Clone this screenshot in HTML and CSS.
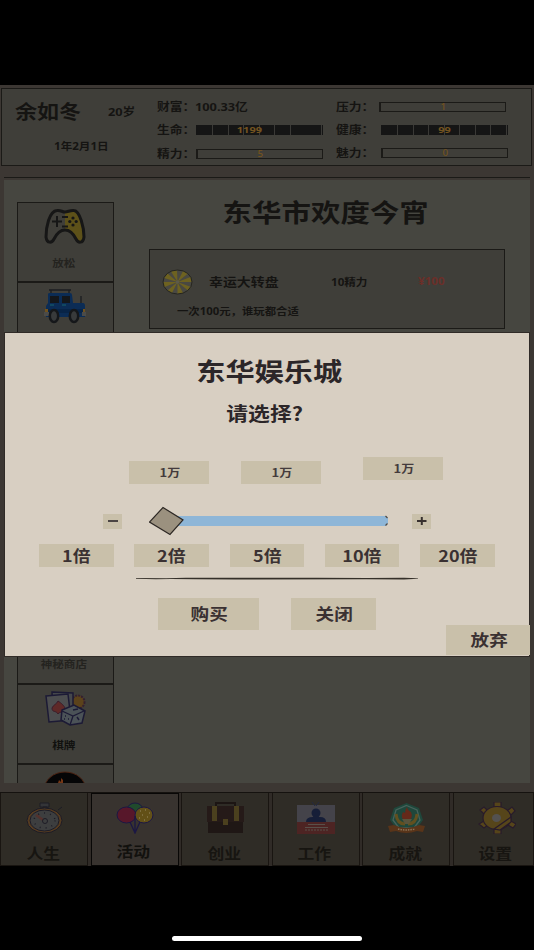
FILE: index.html
```
<!DOCTYPE html>
<html lang="zh-CN">
<head>
  <meta charset="UTF-8" />
  <meta name="viewport" content="width=device-width, initial-scale=1.0"/>
  <title>东华娱乐城</title>
  <link rel="stylesheet" href="styles.css">
</head>
<body>

<div class="game">

  <!-- Player status -->
  <header class="status">
    <div class="who">
      <div class="who-top">
        <span class="name">余如冬</span>
        <span class="age">20岁</span>
      </div>
      <div class="date">1年2月1日</div>
    </div>
    <div class="stats stats-left">
      <div class="stat"><span class="label">财富：</span><span class="money">100.33亿</span></div>
      <div class="stat"><span class="label">生命：</span><div class="meter full"><b>1199</b></div></div>
      <div class="stat energy"><span class="label">精力：</span><div class="meter"><b>5</b></div></div>
    </div>
    <div class="stats stats-right">
      <div class="stat stress"><span class="label">压力：</span><div class="meter"><b>1</b></div></div>
      <div class="stat"><span class="label">健康：</span><div class="meter full"><b>99</b></div></div>
      <div class="stat charm"><span class="label">魅力：</span><div class="meter"><b>0</b></div></div>
    </div>
  </header>

  <!-- Activities -->
  <main class="panel">
    <nav class="side">
      <div class="side-item">
        <svg width="42" height="36" viewBox="0 0 42 36">
          <path d="M21 4H32C37 5 40 20 40 30C39 36 34 35 32 31C29 25 26 22 21 22Z" fill="#5d5119"/>
          <path d="M13 2.5C17 2 18 4 21 4S26 2 30 2.5C36 3 40 20 40 29C39 36 34 35 32 31C29 25 26 22 21 22S13 25 10 31C8 35 3 36 2 29C2 20 5 3 13 2.5Z" fill="none" stroke="#161616" stroke-width="3"/>
          <path d="M8 13.500h10M13 8v11M18 9h6M18 18.500h6" stroke="#161616" stroke-width="2"/>
          <g fill="#161616"><circle cx="29" cy="10" r="1.600"/><circle cx="29" cy="17" r="1.600"/><circle cx="25.800" cy="13.500" r="1.600"/><circle cx="32.200" cy="13.500" r="1.600"/></g>
        </svg>
        <span class="muted">放松</span>
      </div>
      <div class="side-item">
        <svg width="42" height="36" viewBox="0 0 42 36">
          <path d="M5 2h22M7 2v4M25 2v4M37 8v10" stroke="#1b1d20" stroke-width="1.300"/>
          <path d="M4 6Q4 5 6 5H26Q28 5 28 7L29 15H39Q41 15 41 18V29H2V18L4 15Z" fill="#0b2c55"/>
          <path d="M2 21h39v4H2z" fill="#082447"/>
          <path d="M6 8h9v7H6zM18 8h8v7h-8z" fill="#14171b"/>
          <path d="M6 17h4M18 17h4" stroke="#145066" stroke-width="1.500"/>
          <path d="M0 24h5v4H0zM38 24h4v4h-4z" fill="#4b4b49"/>
          <path d="M1 21h3v3H1zM39 21h2v3h-2z" fill="#71521c"/>
          <g fill="#383a3b" stroke="#15171a" stroke-width="2.500"><ellipse cx="10" cy="28" rx="4.200" ry="6"/><ellipse cx="30" cy="28" rx="4.200" ry="6"/></g>
        </svg>
      </div>
      <div class="side-item"></div>
      <div class="side-item"></div>
      <div class="side-item"></div>
      <div class="side-item"><i class="icon-gap"></i><span class="muted">神秘商店</span></div>
      <div class="side-item">
        <svg width="42" height="36" viewBox="0 0 42 36">
          <circle cx="34" cy="12" r="6.500" fill="#5b421b" stroke="#35202f" stroke-width="2" stroke-dasharray="2 1"/>
          <path d="M8 2L29 3V24H9Z" fill="#45474b" stroke="#1c1a35" stroke-width="1.500"/>
          <path d="M2 6L24 4L27 30L5 32Z" fill="#4c4d4f" stroke="#1c1a35" stroke-width="1.500"/>
          <path d="M14 11C17 13 21 16 21 19C20 23 16 21 14 24C12 20 8 23 8 18C9 15 13 14 14 11Z" fill="#5f2928" stroke="#3a1d2b"/>
          <path d="M18 20L30 15L41 21L38 33L26 35L17 30Z" fill="#4b5257" stroke="#1c1a35" stroke-width="1.500"/>
          <path d="M18 21L29 26L40 21M29 26L26 35" fill="none" stroke="#1c1a35" stroke-width="1.300"/>
          <path d="M21 26h1M24 29h1M20 29h1M33 27l2 3M29 20l5-1" stroke="#1c1a35" stroke-width="1.500"/>
        </svg>
        <span class="dark">棋牌</span>
      </div>
      <div class="side-item">
        <svg width="42" height="36" viewBox="0 0 42 36">
          <ellipse cx="21" cy="19" rx="20.500" ry="17" fill="#050506" stroke="#4d2413"/>
          <path d="M13 16L15 10L17 12L17 8L19 10V16Z" fill="#753615"/>
        </svg>
      </div>
    </nav>

    <section class="events">
      <h1>东华市欢度今宵</h1>
      <div class="event">
        <div class="event-row">
          <svg class="wheel" width="31" height="26" viewBox="0 0 31 26">
            <ellipse cx="15.500" cy="13" rx="14.500" ry="12" fill="#494842"/>
            <path fill="#6e6220" d="M15.500 13L15 1L9 2.500ZM15.500 13L5.500 4.500L2 9ZM15.500 13L1 13L2.500 18ZM15.500 13L5.500 21.500L10 24ZM15.500 13L15.500 25L21 24ZM15.500 13L26 21.500L29 18ZM15.500 13L30 13L28.500 8ZM15.500 13L26 4.500L21 2Z"/>
            <ellipse cx="15.500" cy="13" rx="14.500" ry="12" fill="none" stroke="#25251f"/>
            <circle cx="15.500" cy="13" r="1.800" fill="#5c5a4c"/>
          </svg>
          <span class="event-name">幸运大转盘</span>
          <span class="cost">10精力</span>
          <span class="price">¥100</span>
        </div>
        <p>一次100元，谁玩都合适</p>
      </div>
    </section>
  </main>

  <!-- Bottom tabs -->
  <footer class="tabs">
    <div class="tab">
      <svg width="38" height="32" viewBox="0 0 38 32">
        <path d="M14 1h9v4h-9zM17 5h4v4h-4zM32 8l4-3" fill="#343538" stroke="#1c1c24"/>
        <ellipse cx="18.500" cy="18.500" rx="17.500" ry="12.500" fill="#553b20" stroke="#1d1c26"/>
        <ellipse cx="18.500" cy="18.500" rx="14.500" ry="10.500" fill="#3d3e3f" stroke="#1d1c26"/>
        <ellipse cx="18.500" cy="18.500" rx="10.500" ry="7.500" fill="none" stroke="#1d1c26" stroke-width="1.500" stroke-dasharray="1 5"/>
        <path d="M18.500 19L10 13" stroke="#54312c" stroke-width="2.500"/>
        <circle cx="19" cy="19" r="2.500" fill="#3d3e3f" stroke="#1d1c26"/>
      </svg>
      <span>人生</span>
    </div>
    <div class="tab current">
      <svg width="38" height="32" viewBox="0 0 38 32">
        <ellipse cx="19" cy="7" rx="7.500" ry="6" fill="#204a2c" stroke="#1b1744"/>
        <ellipse cx="10.500" cy="13" rx="9.500" ry="8" fill="#57172a" stroke="#1b1744"/>
        <ellipse cx="28" cy="13" rx="9" ry="8" fill="#625017" stroke="#1b1744"/>
        <path d="M14 20L19 31L24 20M19 14V31" fill="none" stroke="#1b1744" stroke-width="1.300"/>
        <path d="M24 9h1M29 8h1M33 11h1M26 13h1M31 15h1M23 16h1M28 18h1" stroke="#85774b" stroke-width="1.300"/>
      </svg>
      <span>活动</span>
    </div>
    <div class="tab">
      <svg width="38" height="32" viewBox="0 0 38 32">
        <path d="M9 4V1H28V4" fill="none" stroke="#1c1513" stroke-width="2"/>
        <path d="M0 4h37v16H0z" fill="#251a18"/>
        <path d="M1 20h35v11H1z" fill="#1f1715"/>
        <path d="M5 4h5v15H5zM27 4h5v15h-5zM16 17h5v6h-5z" fill="#4b401e"/>
      </svg>
      <span>创业</span>
    </div>
    <div class="tab">
      <svg width="38" height="32" viewBox="0 0 38 32">
        <path d="M0 3h38v17H0z" fill="#44434a"/>
        <path d="M0 20h38v12H0z" fill="#4d2423"/>
        <ellipse cx="19" cy="11" rx="4.500" ry="4.500" fill="#161e38"/>
        <path d="M9 20Q9 15 16 15H23Q29 15 29 20Z" fill="#161e38"/>
        <path d="M15 0l3 4M22 0l-3 4" stroke="#242a42"/>
        <path d="M11 22.500h17M8 25.500h23" stroke="#59504a"/>
        <path d="M8 28h23" stroke="#59504a" stroke-dasharray="2 1"/>
      </svg>
      <span>工作</span>
    </div>
    <div class="tab">
      <svg width="38" height="32" viewBox="0 0 38 32">
        <path d="M18.500 1L31 6L35 18L27 29H10L2 18L6 6Z" fill="#1f473b"/>
        <path d="M18.500 3.500L29 8L32 18L26 26H11L5 18L8 8Z" fill="none" stroke="#47625b" stroke-width="1.300"/>
        <path d="M8 12Q9 22 17 22M29 12Q28 22 20 22" fill="none" stroke="#62501f" stroke-width="3"/>
        <path d="M19 5Q20 9 23 10Q26 17 19 18Q11 17 15 10L17 11Q17 8 19 5Z" fill="#65291a"/>
        <path d="M14 17h10l-3 5h-4z" fill="#59543c"/>
        <path d="M0 24L6 23Q18 29 31 23L37 24L35 30L29 29Q18 33 8 29L2 30Z" fill="#593419"/>
        <path d="M10 27Q18 29 27 27" fill="none" stroke="#8c7558" stroke-width="1.500" stroke-dasharray="1.500 1"/>
      </svg>
      <span>成就</span>
    </div>
    <div class="tab">
      <svg width="38" height="32" viewBox="0 0 38 32">
        <g fill="#56451a" stroke="#281b2b" stroke-width="1.200">
          <path d="M16 0h7v5h-7zM16 27h7v5h-7zM2 8l4-3 4 4-4 3zM29 9l5-4 3 4-4 4zM1 22l5-3 4 4-4 3zM30 23l3-4 5 3-3 4z"/>
          <ellipse cx="19" cy="16" rx="14" ry="11.500"/>
          <path d="M16 27L33 15V20L22 28Z"/>
        </g>
        <ellipse cx="18.500" cy="16" rx="4.500" ry="4" fill="#535150"/>
      </svg>
      <span>设置</span>
    </div>
  </footer>
</div>

<div class="home-bar"></div>

<!-- Casino dialog -->
<div class="dialog">
  <h2>东华娱乐城</h2>
  <h3>请选择?</h3>

  <div class="amounts">
    <div class="chip"><span>1万</span></div>
    <div class="chip"><span>1万</span></div>
    <div class="chip raised"><span>1万</span></div>
  </div>

  <div class="slider">
    <button class="step"><svg width="19" height="15" viewBox="0 0 19 15"><path d="M5 7h10" stroke="#4b4544" stroke-width="2"/></svg></button>
    <svg class="track" width="240" height="30" viewBox="0 0 240 30">
      <path d="M18 10H237L239 12V17L237 20H18Z" fill="#8eb6d7"/>
      <path d="M236.500 10L238.500 12M238.500 17.500L236.500 19.500" stroke="#504a43" stroke-width="1.200"/>
      <path d="M14 1.500L34 14L21 28.500L0.500 16Z" fill="#9b917f" stroke="#2d2824" stroke-width="1.200"/>
    </svg>
    <button class="step"><svg width="19" height="15" viewBox="0 0 19 15"><path d="M5 7h9.500M9.800 3v8" stroke="#38312f" stroke-width="2"/></svg></button>
  </div>

  <div class="times">
    <button><span>1倍</span></button>
    <button><span>2倍</span></button>
    <button><span>5倍</span></button>
    <button><span>10倍</span></button>
    <button><span>20倍</span></button>
  </div>

  <svg class="rule" width="282" height="4" viewBox="0 0 282 4">
    <path d="M0 1L30 1.200L50 .8L180 .8L230 1L268 .8L282 1.200V1.800L268 2.500L230 2.200L100 2.500L60 2.200L35 2L20 2.200L0 1.800Z" fill="#353029"/>
  </svg>

  <div class="actions">
    <button class="buy"><span>购买</span></button>
    <button class="close"><span>关闭</span></button>
  </div>
  <button class="quit"><span>放弃</span></button>
</div>

</body>
</html>
```
FILE: styles.css
```
:root {
  --line: #1b1a17;
  --ink: #151412;
  --chip: #c9c0aa;
  --paper: #d8cfc2;
  --font: 'Noto Sans', 'Noto Sans CJK SC', sans-serif;
  --font-cjk: 'Noto Sans CJK SC', sans-serif;
}

* {
  box-sizing: border-box;
  margin: 0;
  padding: 0;
}

body {
  width: 534px;
  height: 950px;
  background: #000;
  color: var(--ink);
  font-family: var(--font);
  font-weight: bold;
  overflow: hidden;
  padding-top: 85px;
  position: relative;
}

svg {
  display: block;
  flex: none;
}

/* the game is drawn wider than its natural proportions */
span,
h1, h2, h3,
.date,
.event p,
.meter b {
  display: inline-block;
  transform: scaleX(1.16);
  white-space: nowrap;
}

.game {
  height: 781px;
  background: #3c3733;
  padding-top: 3px;
  display: flex;
  flex-direction: column;
}

/* Status */
.status {
  height: 78px;
  margin: 0 2px 0 1px;
  flex: none;
  border: 1px solid var(--line);
  background: #3f3e39;
  display: flex;
  font-size: 11px;
  line-height: 16px;
}

.who {
  width: 155px;
  padding: 12px 0 0 13px;
}

.who-top {
  display: flex;
  align-items: center;
  height: 22px;
}

.name {
  font-size: 19px;
  transform-origin: left;
  width: 93px;
}

.age {
  transform-origin: left;
}

.date {
  margin: 15px 0 0 39px;
  font-size: 10px;
  transform-origin: left;
}

.stats {
  padding-top: 10px;
}

.stats-left {
  width: 179px;
}

.stat {
  display: flex;
  align-items: center;
  height: 16px;
  margin-bottom: 7px;
}

.label {
  width: 39px;
  transform-origin: left;
}

.stats-right .label {
  width: 45px;
}

.money {
  transform-origin: left;
  margin-left: -1px;
}

.meter {
  width: 127px;
  height: 10px;
  border: 1px solid var(--line);
  border-left-width: 2px;
  display: flex;
  align-items: center;
  justify-content: center;
}

.meter b {
  font-size: 8.5px;
  line-height: 8px;
  font-weight: 500;
  color: #735320;
}

.meter.full {
  border: none;
  background: repeating-linear-gradient(90deg, #151515 0 14.5px, #3a3936 14.5px 15.5px) 2px 0 #151515 no-repeat;
}

.meter.full b {
  padding-right: 18px;
  font-size: 9.5px;
  font-weight: bold;
}

.stats-right .meter.full b {
  padding: 0;
}

.energy {
  margin-top: 8px;
}

.stress .meter {
  margin-left: -2px;
}

/* Panel */
.panel {
  height: 606px;
  margin: 11px 4px 9px;
  flex: none;
  background: #464640;
  border-top: 1px solid var(--line);
  box-shadow: inset 0 2px #3c3733;
  display: flex;
  overflow: hidden;
}

.side {
  width: 97px;
  margin: 24px 36px 0 13px;
}

.side-item {
  height: 80.3px;
  border: 1px solid var(--line);
  background: #3f3e39;
  padding: 5px 2px 0 0;
  display: flex;
  flex-direction: column;
  align-items: center;
  gap: 10px;
}

.side-item span {
  font-size: 10px;
  line-height: 18px;
  padding-right: 2px;
}

.muted {
  color: #24231f;
}

.dark {
  color: #11110f;
}

.icon-gap {
  height: 36px;
}

.events {
  width: 355px;
  margin-left: -1px;
}

h1, h2, h3 {
  display: block;
  width: fit-content;
}

h1 {
  font: bold 25.4px/34px var(--font-cjk);
  margin: 16px auto 21px;
  padding-right: 2px;
}

.event {
  width: 356px;
  height: 80px;
  border: 1px solid var(--line);
  background: #3f3e39;
  padding: 18px 0 0 12px;
}

.event-row {
  display: flex;
  align-items: center;
  height: 28px;
  font-size: 10px;
}

.event-row span {
  transform-origin: left;
}

.event-name {
  font-size: 12px;
  width: 122px;
  margin: -1px 0 0 16px;
}

.cost {
  width: 87px;
  margin-top: -2px;
}

.price {
  margin-top: -2px;
  color: #6b2f29;
}

.event p {
  margin: 8px 0 0 15px;
  font-size: 9.8px;
  line-height: 16px;
  transform-origin: left;
}

/* Tabs */
.tabs {
  height: 74px;
  display: grid;
  grid-template-columns: repeat(5, 88px) 1fr;
  column-gap: 2.5px;
  background: #302b27;
  border-top: 1px solid #15120f;
  flex: none;
}

.tab {
  border: 1px solid #191511;
  border-width: 0 1px 1px;
  background: #2f2c26;
  color: #171511;
  padding: 9px 0 0 1px;
  display: flex;
  flex-direction: column;
  align-items: center;
  font-size: 14.5px;
}

.tab:last-child {
  padding-left: 7px;
}

.tab span {
  line-height: 20px;
  margin-top: 9px;
  padding-right: 3px;
}

.tab.current {
  border: 1px solid #080706;
  background: #38332f;
  color: #12110e;
  padding-top: 8px;
}

.tab.current span {
  margin-top: 7px;
}

.home-bar {
  width: 190px;
  height: 5px;
  margin: 70px auto 0;
  border-radius: 3px;
  background: #fff;
}

/* Dialog */
.dialog {
  position: absolute;
  top: 332px;
  left: 4px;
  width: 526px;
  height: 325px;
  background: var(--paper);
  border: 1px solid #302b27;
  color: #2c2628;
  font-family: var(--font-cjk);
}

h2 {
  font-size: 25.2px;
  line-height: 36px;
  margin: 19px auto 0;
  padding-left: 3px;
}

h3 {
  font-size: 18.8px;
  line-height: 26px;
  margin: 12px auto 0;
  padding-right: 5px;
}

.dialog button {
  border: none;
  background: var(--chip);
  color: #3a3132;
  font: bold 17px/20px var(--font-cjk);
  display: flex;
  align-items: center;
  justify-content: center;
}

.amounts {
  display: flex;
  padding-left: 124px;
  margin-top: 35px;
}

.chip {
  width: 80px;
  height: 23px;
  margin-right: 32px;
  padding-left: 2px;
  background: var(--chip);
  color: #443b3c;
  font-size: 11.2px;
  line-height: 22px;
  text-align: center;
}

.chip.raised {
  margin: -4px 0 4px 10px;
}

.slider {
  display: flex;
  align-items: center;
  justify-content: space-between;
  height: 30px;
  margin: 22px 98px 0;
}

.slider .track {
  margin-right: -20px;
  margin-left: -16px;
}

.dialog .step {
  width: 19px;
  height: 15px;
}

.times {
  display: flex;
  gap: 20.8px;
  margin: 8px 0 0 34px;
}

.times button {
  width: 74.5px;
  height: 23px;
}

.times span {
  font-size: 15.5px;
  margin-top: -2px;
}

.rule {
  margin: 10px 0 0 131px;
}

.actions {
  display: flex;
  gap: 32px;
  margin: 17px 0 0 153px;
}

.actions button {
  height: 32px;
}

.dialog .buy {
  width: 101px;
}

.dialog .close {
  width: 85px;
}

.actions span,
.quit span {
  font-size: 16px;
  margin-top: -2px;
  padding-left: 2px;
}

.dialog .quit {
  position: absolute;
  right: -1px;
  bottom: 1px;
  width: 84px;
  height: 30px;
}
```
